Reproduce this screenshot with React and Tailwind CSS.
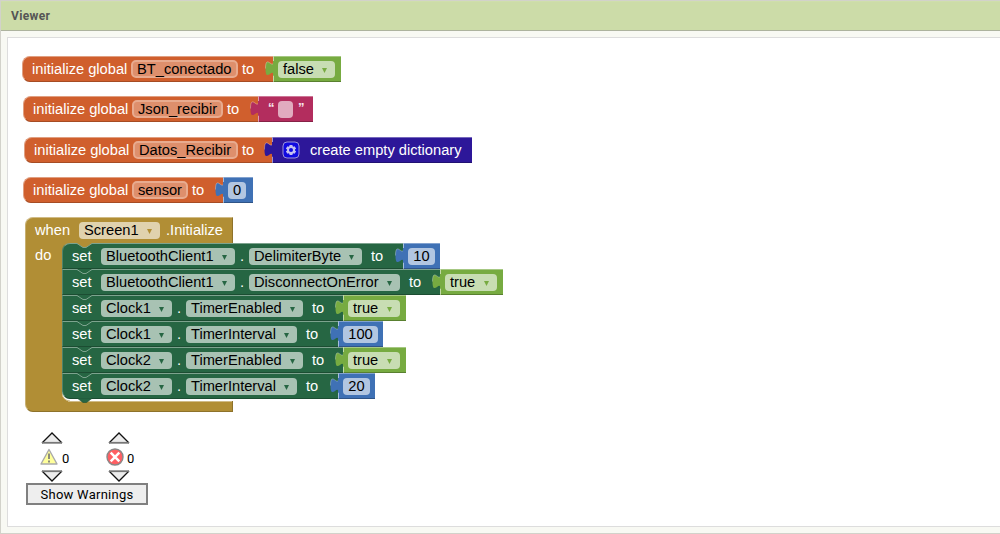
const PUZZLE = 'M8.5 5 C8.5 15 0.5 -3 0.5 12.5 S8.5 10 8.5 20 Z';

function Value({ color, className, children }) {
  return (
    <div className={`relative flex h-[26px] items-center border-t border-l border-b border-t-white/35 border-l-white/35 border-b-black/25 ${color} ${className}`}>
      <svg className="absolute -top-px -left-[9px]" width="10" height="26" viewBox="0 0 10 26">
        <path d={PUZZLE} fill="currentColor" />
        <path d="M8.5 0 V5 C8.5 15 0.5 -3 0.5 12.5" fill="none" stroke="#fff" strokeOpacity=".3" />
        <path d="M9 5 v15" stroke="currentColor" strokeWidth="2" />
        <path d="M8.5 19.5 V26" stroke="#fff" strokeOpacity=".3" />
      </svg>
      {children}
    </div>
  );
}

function Dropdown({ text, className, arrow }) {
  return (
    <div className={`flex h-[17px] shrink-0 items-center justify-between rounded-[4px] bg-white/60 pr-[8px] pl-[5px] text-black ${className}`}>
      <span className="leading-[17px]">{text}</span>
      <svg className={`mt-[2px] ${arrow}`} width="5" height="5" viewBox="0 0 5 5">
        <path d="M0 0 H5 L2.5 5 Z" fill="currentColor" />
      </svg>
    </div>
  );
}

function NumberField({ text, className }) {
  return <div className={`flex h-[17px] shrink-0 items-center justify-center rounded-[4px] bg-white/60 text-black ${className}`}>{text}</div>;
}

function Logic({ text, className, field }) {
  return (
    <Value color="bg-[#77ab41] text-[#77ab41]" className={`pl-1 ${className}`}>
      <Dropdown text={text} className={field} arrow="text-[#77ab41]" />
    </Value>
  );
}

function MathBlock({ text, className, field }) {
  return (
    <Value color="bg-[#3f71b5] text-[#3f71b5]" className={`pl-1 ${className}`}>
      <NumberField text={text} className={field} />
    </Value>
  );
}

function Global({ name, position, stem, field, children }) {
  return (
    <div className={`absolute flex h-[26px] ${position}`}>
      <div className={`flex h-[26px] shrink-0 items-center rounded-l-[8px] border-t border-l border-b border-t-[#e09f81] border-l-[#e09f81] border-b-[#a64c24] bg-[#d05f2d] pl-[9px] text-white ${stem}`}>
        <span className="w-[99px] shrink-0">initialize global</span>
        <div className={`mr-[4px] flex h-[18px] shrink-0 items-center rounded-[5px] border-2 border-[#e8ab8f] bg-[#de8f6c] pl-[4px] text-black ${field}`}>{name}</div>
        <span>to</span>
      </div>
      {children}
    </div>
  );
}

function Setter({ component, property, stem, first, second, last, children }) {
  return (
    <div className="relative flex h-[26px]">
      <div className={`flex h-[26px] shrink-0 items-center border-t border-l border-b border-t-[#7da38e] border-l-[#4e836a] border-b-[#1c4d32] bg-[#266643] pl-[9px] text-white ${stem} ${last ? 'rounded-bl-[8px]' : ''}`}>
        <span className="w-[29px] shrink-0">set</span>
        <Dropdown text={component} className={first} arrow="text-[#266643]" />
        <span className="w-[14px] shrink-0 pl-[5px]">.</span>
        <Dropdown text={property} className={second} arrow="text-[#266643]" />
        <span className="pl-[9px]">to</span>
      </div>
      {children}
      {last && (
        <svg className="absolute top-[25px] left-[15px]" width="16" height="6" viewBox="0 0 16 6">
          <path d="M0 0 L6 4.5 H9.5 L15.5 0 Z" fill="#266643" stroke="#1c4d32" strokeWidth=".6" />
        </svg>
      )}
    </div>
  );
}

function Notch({ fill, className }) {
  return (
    <svg className={`absolute ${className}`} width="17" height="7" viewBox="0 0 17 7">
      <path d="M1 0 V0.5 L7 4.5 H10 L16 0.5 V0 Z" fill={fill} />
      <path d="M1 0.5 L7 4.5 H10 L16 0.5" fill="none" stroke="#7da38e" />
    </svg>
  );
}

function EventBlock() {
  return (
    <div className="absolute top-[179px] left-[17px] w-[480px] text-white">
      <div className="flex h-[26px] w-[208px] items-center rounded-tl-[8px] border-t border-l border-r border-t-[#d0bb86] border-l-[#c8b072] border-r-[#8e722a] bg-[#b18e35] pl-[9px]">
        <span className="w-[44px] shrink-0">when</span>
        <Dropdown text="Screen1" className="w-[81px]" arrow="text-[#b18e35]" />
        <span className="pl-[6px]">.Initialize</span>
      </div>
      <div className="flex h-[158px]">
        <div className="w-[37px] shrink-0 border-l border-l-[#c8b072] bg-[#b18e35] pl-[9px] leading-[24px]">do</div>
        <div className="relative h-[158px] bg-[linear-gradient(#b18e35,#b18e35)] bg-[length:8px_8px] bg-no-repeat">
          <svg className="absolute bottom-0 left-0" width="8" height="8" viewBox="0 0 8 8">
            <path d="M0 0 A8 8 0 0 0 8 8 H0 Z" fill="#b18e35" />
            <path d="M0 0 A8 8 0 0 0 8 8" fill="none" stroke="#d0bb86" />
          </svg>
          <div className="relative overflow-visible [&>*:first-child>*:first-child]:rounded-tl-[8px]">
            <Setter component="BluetoothClient1" property="DelimiterByte" stem="w-[341px]" first="w-[134px]" second="w-[113px]">
              <MathBlock text="10" className="w-[37px]" field="w-[27px]" />
            </Setter>
            <Setter component="BluetoothClient1" property="DisconnectOnError" stem="w-[378px]" first="w-[134px]" second="w-[151px]">
              <Logic text="true" className="w-[63px]" field="w-[52px]" />
            </Setter>
            <Setter component="Clock1" property="TimerEnabled" stem="w-[281px]" first="w-[71px]" second="w-[117px]">
              <Logic text="true" className="w-[63px]" field="w-[52px]" />
            </Setter>
            <Setter component="Clock1" property="TimerInterval" stem="w-[276px]" first="w-[71px]" second="w-[111px]">
              <MathBlock text="100" className="w-[45px]" field="w-[35px]" />
            </Setter>
            <Setter component="Clock2" property="TimerEnabled" stem="w-[281px]" first="w-[71px]" second="w-[117px]">
              <Logic text="true" className="w-[63px]" field="w-[52px]" />
            </Setter>
            <Setter component="Clock2" property="TimerInterval" stem="w-[276px]" first="w-[71px]" second="w-[111px]" last>
              <MathBlock text="20" className="w-[37px]" field="w-[27px]" />
            </Setter>
            <Notch fill="#b18e35" className="top-0 left-[14px]" />
            <Notch fill="#266643" className="top-[26px] left-[14px]" />
            <Notch fill="#266643" className="top-[52px] left-[14px]" />
            <Notch fill="#266643" className="top-[78px] left-[14px]" />
            <Notch fill="#266643" className="top-[104px] left-[14px]" />
            <Notch fill="#266643" className="top-[130px] left-[14px]" />
          </div>
        </div>
      </div>
      <div className="flex h-[11px] w-[208px] rounded-bl-[8px] border-r border-b border-l border-r-[#8e722a] border-b-[#8e722a] border-l-[#c8b072] bg-[#b18e35] pl-[42px]">
        <div className="h-px flex-1 bg-[#d0bb86]" />
      </div>
    </div>
  );
}

function Triangle({ down }) {
  return (
    <svg width="22" height="12" viewBox="0 0 22 12">
      <path d={down ? 'M1 1 L11 11 L21 1' : 'M1 11 L11 1 L21 11'} fill="#ececec" stroke="#111" strokeWidth="1.3" />
      <path d={down ? 'M1 1.2 H21' : 'M1 10.8 H21'} stroke="#777" strokeWidth="1.8" />
    </svg>
  );
}

function Counter({ children }) {
  return (
    <div className="flex w-[34px] flex-col">
      <div className="pl-[3px]"><Triangle /></div>
      <div className="mt-[4px] mb-[4px] flex h-[18px] items-center gap-[3px] pl-[2px]">
        {children}
        <span className="pt-[3px]">0</span>
      </div>
      <div className="pl-[3px]"><Triangle down /></div>
    </div>
  );
}

function Warnings() {
  return (
    <div className="absolute top-[394px] left-[18px] w-[122px] font-[Roboto,sans-serif] text-[13px] leading-none text-black">
      <div className="flex gap-[33px] pl-[12px]">
        <Counter>
          <svg className="-ml-px shrink-0" width="20" height="18" viewBox="0 0 20 18">
            <path d="M10 1.5 L18 16 H2 Z" fill="#ffff9b" stroke="#aaa" strokeWidth="1.4" strokeLinejoin="round" />
            <path d="M10 5.5 V11 M10 12.6 V14.6" stroke="#8c8c7c" strokeWidth="2" />
          </svg>
        </Counter>
        <Counter>
          <svg className="-ml-px shrink-0" width="18" height="18" viewBox="0 0 18 18">
            <circle cx="9" cy="9" r="8" fill="#ff5f63" stroke="#888" strokeWidth="1.4" />
            <path d="M4.7 4.7 L13.3 13.3 M13.3 4.7 L4.7 13.3" stroke="#fff" strokeWidth="2.5" />
          </svg>
        </Counter>
      </div>
      <button className="mt-px flex h-[22px] w-[122px] items-center justify-center border-2 border-[#808080] bg-[#eee] tracking-[0.26px]">Show Warnings</button>
    </div>
  );
}

export default function App() {
  return (
    <div className="flex h-[534px] w-[1000px] flex-col overflow-hidden border-t border-b border-l border-[#d2d2ca] bg-[#f8f9f3]">
      <header className="flex h-[30px] shrink-0 items-center border-t border-b border-t-[#cfdfab] border-b-[#adb39e] bg-[#ccdca8] pl-[10px] font-[Roboto,sans-serif] text-[12px] font-bold tracking-[0.35px] text-[#555]">Viewer</header>
      <main className="mt-[6px] mb-[6px] ml-[6px] flex-1 border-t border-b border-l border-[#ddd] bg-white">
        <div className="relative h-full font-['Liberation_Sans',Arial,sans-serif] text-[14.667px] leading-[17px] whitespace-nowrap">
          <Global name="BT_conectado" position="top-[18px] left-[14px]" stem="w-[251px]" field="w-[107px]">
            <Logic text="false" className="w-[68px]" field="w-[57px]" />
          </Global>
          <Global name="Json_recibir" position="top-[58px] left-[15px]" stem="w-[235px]" field="w-[91px]">
            <Value color="bg-[#b32d5e] text-[#b32d5e]" className="w-[55px] pl-[9px]">
              <span className="-mt-[3px] w-[10px] text-[13px] font-bold text-white/90">“</span>
              <span className="mr-[5px] h-[17px] w-[15px] rounded-[4px] bg-[#e1abbf]" />
              <span className="-mt-[3px] text-[13px] font-bold text-white/90">”</span>
            </Value>
          </Global>
          <Global name="Datos_Recibir" position="top-[99px] left-[16px]" stem="w-[248px]" field="w-[105px]">
            <Value color="bg-[#2d1799] text-[#2d1799]" className="w-[200px] pl-[9px]">
              <svg className="shrink-0" width="18" height="18" viewBox="0 0 18 18">
                <rect x="1" y="1" width="16" height="16" rx="4" fill="#1009e0" stroke="#9c94d8" />
                <path d="M9 3.9 V14.1 M4.6 6.5 L13.4 11.5 M4.6 11.5 L13.4 6.5" stroke="#c5c1f0" strokeWidth="3" />
                <circle cx="9" cy="9" r="4" fill="#c5c1f0" />
                <circle cx="9" cy="9" r="2" fill="#1009e0" />
              </svg>
              <span className="pl-[10px] text-white">create empty dictionary</span>
            </Value>
          </Global>
          <Global name="sensor" position="top-[139px] left-[15px]" stem="w-[200px]" field="w-[56px]">
            <MathBlock text="0" className="w-[30px]" field="w-[18px]" />
          </Global>
          <EventBlock />
          <Warnings />
        </div>
      </main>
    </div>
  );
}
